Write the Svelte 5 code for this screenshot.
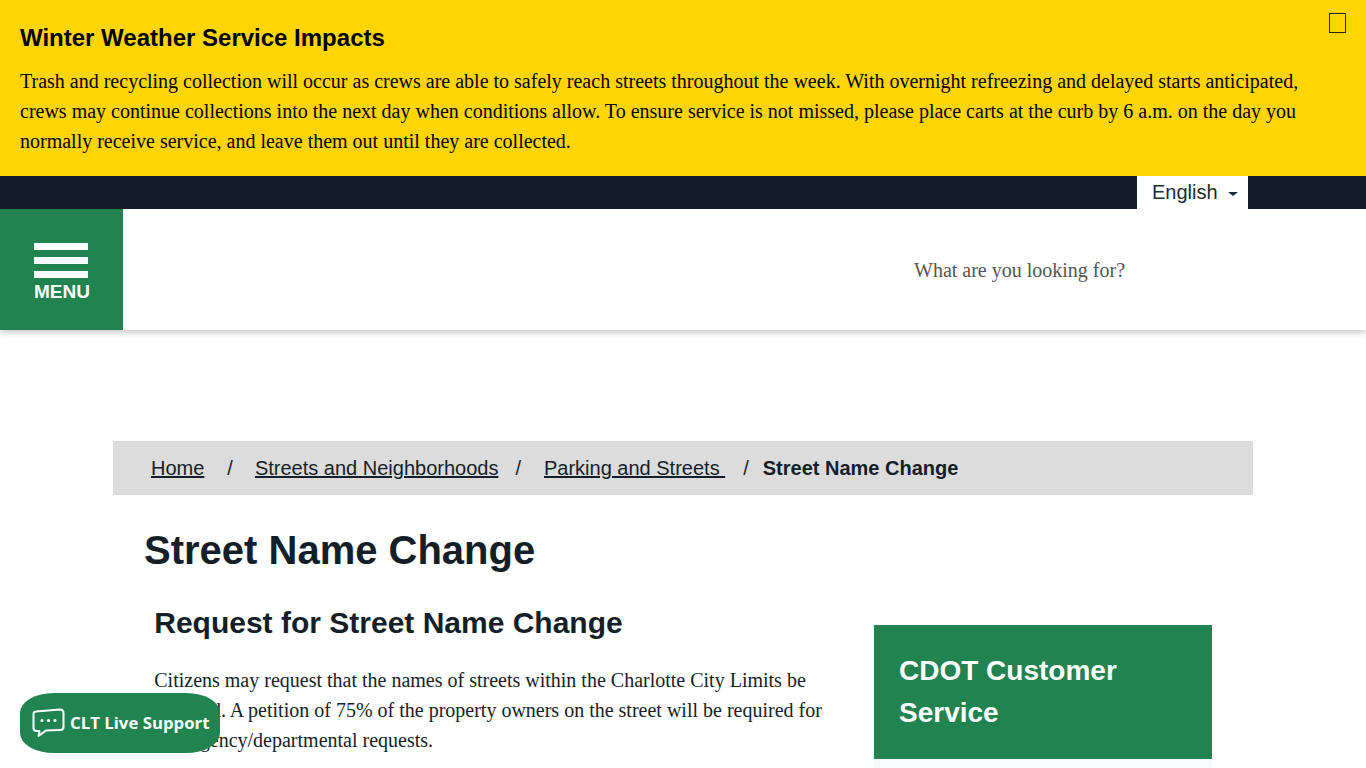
<script>
	const crumbs = [
		{ label: 'Home', before: 23, after: 22 },
		{ label: 'Streets and Neighborhoods', before: 17, after: 23 },
		{ label: 'Parking and Streets ', before: 18, after: 14 }
	];
</script>

<div class="page">
	<section class="alert">
		<button class="close" aria-label="Close"></button>
		<h4>Winter Weather Service Impacts</h4>
		<p>Trash and recycling collection will occur as crews are able to safely reach streets throughout the week. With overnight refreezing and delayed starts anticipated, crews may continue collections into the next day when conditions allow. To ensure service is not missed, please place carts at the curb by 6 a.m. on the day you normally receive service, and leave them out until they are collected.</p>
	</section>

	<div class="topbar">
		<div class="lang">English <span class="caret"></span></div>
	</div>

	<header>
		<button class="menu">
			<span class="bar"></span>
			<span class="bar"></span>
			<span class="bar"></span>
			<span class="menu-label">MENU</span>
		</button>
		<div class="search">What are you looking for?</div>
	</header>

	<main>
		<nav class="breadcrumb">
			{#each crumbs as c}
				<a href="#top">{c.label}</a>
				<span style="margin: 0 {c.after}px 0 {c.before}px">/</span>
			{/each}
			<strong>Street Name Change</strong>
		</nav>

		<h1>Street Name Change</h1>

		<div class="columns">
			<article>
				<h2>Request for Street Name Change</h2>
				<p>Citizens may request that the names of streets within the Charlotte City Limits be changed. A petition of 75% of the property owners on the street will be required for non-agency/departmental requests.</p>
			</article>
			<aside>
				<div class="aside-head">CDOT Customer Service</div>
				<div class="aside-body"></div>
			</aside>
		</div>
	</main>

	<button class="chat">
		<svg width="34" height="30" viewBox="0 0 34 30" fill="none" stroke="#fff" stroke-width="2" stroke-linejoin="round" stroke-linecap="round">
			<path d="M4 3.5 L28 1.5 Q31.5 1.5 31.5 5 L31.5 19 Q31.5 22 28 22 L14 22.5 L6.5 28 L7.5 23 L4.5 23 Q1.5 23 1.5 20 L1.5 6 Q1.5 3.5 4 3.5 Z" />
			<circle cx="10" cy="12.5" r="0.6" fill="#fff" />
			<circle cx="16.5" cy="12.5" r="0.6" fill="#fff" />
			<circle cx="23" cy="12.5" r="0.6" fill="#fff" />
		</svg>
		<span>CLT Live Support</span>
	</button>
</div>

<style>
	:global(body) {
		margin: 0;
		background: #fff;
	}

	.page {
		position: relative;
		height: 768px;
		overflow: hidden;
		font-family: 'Liberation Serif', serif;
		font-size: 20px;
		line-height: 30px;
		color: #141e28;
	}

	.alert {
		position: relative;
		box-sizing: border-box;
		height: 176px;
		padding: 20px 20px 0;
		background: #ffd500;
		color: #000;
	}

	.alert h4 {
		margin: 0 0 10px;
		font: bold 24px/36px 'Liberation Sans', sans-serif;
	}

	.alert p {
		margin: 0;
	}

	.close {
		position: absolute;
		top: 13px;
		right: 20px;
		box-sizing: border-box;
		width: 17px;
		height: 20px;
		padding: 0;
		background: none;
		border: 1px solid #222;
	}

	.topbar {
		display: flex;
		justify-content: flex-end;
		height: 33px;
		padding-right: 118px;
		background: #141e28;
	}

	.lang {
		display: flex;
		align-items: center;
		box-sizing: border-box;
		width: 111px;
		padding-left: 15px;
		background: #fff;
		font: 20px/33px 'Liberation Sans', sans-serif;
		color: #212b36;
	}

	.caret {
		margin-left: 10px;
		margin-top: 2px;
		border-top: 4px solid #212b36;
		border-left: 5px solid transparent;
		border-right: 5px solid transparent;
	}

	header {
		display: flex;
		height: 121px;
		background: #fff;
		box-shadow: 0 3px 6px rgba(0, 0, 0, 0.2);
	}

	.menu {
		display: flex;
		flex-direction: column;
		align-items: flex-start;
		box-sizing: border-box;
		width: 123px;
		padding: 34px 0 0 34px;
		background: #218350;
		border: 0;
		color: #fff;
	}

	.bar {
		width: 54px;
		height: 7px;
		margin-bottom: 7px;
		background: #fff;
	}

	.bar:nth-child(3) {
		margin-bottom: 0;
	}

	.menu-label {
		margin-top: 3px;
		font: bold 19px/21px 'Liberation Sans', sans-serif;
	}

	.search {
		margin: 46px 0 0 791px;
		color: #555;
	}

	main {
		box-sizing: border-box;
		width: 1140px;
		margin: 111px auto 0;
	}

	.breadcrumb {
		display: flex;
		align-items: center;
		height: 54px;
		padding-left: 38px;
		background: #dcdcdc;
		font: 20px/27px 'Liberation Sans', sans-serif;
		white-space: pre;
	}

	.breadcrumb a {
		color: #141e28;
	}

	h1 {
		margin: 30px 0 0 31px;
		font: bold 40px/50px 'Liberation Sans', sans-serif;
	}

	.columns {
		display: flex;
	}

	article {
		width: 670px;
		margin: 0 0 0 41.25px;
	}

	article h2 {
		margin: 26px 0 20px;
		font: bold 30px/44px 'Liberation Sans', sans-serif;
	}

	article p {
		margin: 0;
	}

	aside {
		width: 338px;
		margin: 50px 0 0 49.75px;
		background: #f8f9fa;
	}

	.aside-head {
		box-sizing: border-box;
		height: 134px;
		padding: 25px 25px 0;
		background: #218350;
		color: #fff;
		font: bold 28px/42px 'Liberation Sans', sans-serif;
	}

	.aside-body {
		height: 200px;
	}

	.chat {
		position: absolute;
		left: 20px;
		top: 693px;
		display: flex;
		align-items: center;
		gap: 4px;
		box-sizing: border-box;
		width: 200px;
		height: 60px;
		padding: 0 0 0 12px;
		background: #218350;
		border: 0;
		border-radius: 34px / 20px;
		color: #fff;
		font: bold 16.8px/24px 'Open Sans', sans-serif;
		white-space: nowrap;
	}
</style>
